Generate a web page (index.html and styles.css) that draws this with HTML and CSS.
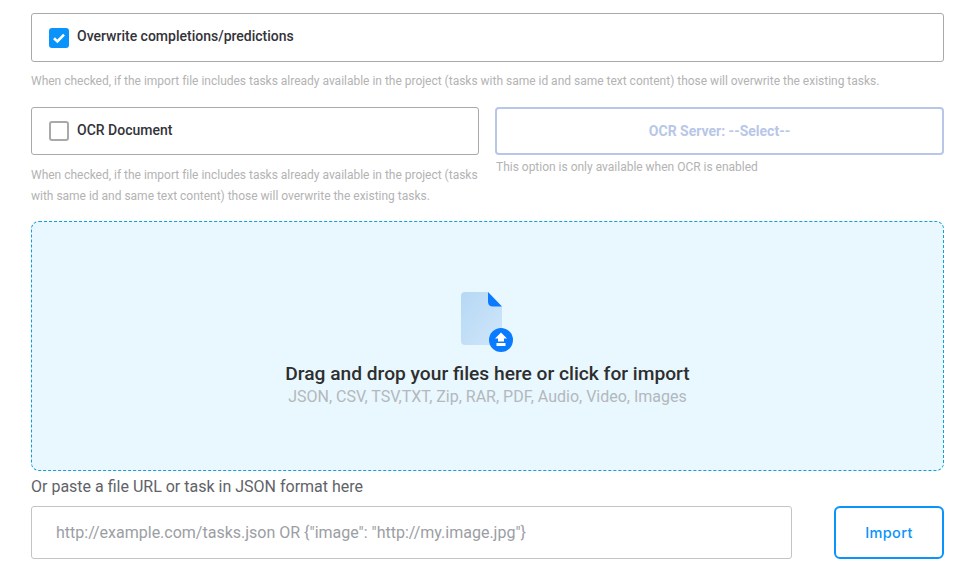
FILE: index.html
```html
<!DOCTYPE html>
<html lang="en">
<head>
    <meta charset="UTF-8">
    <title>Import tasks</title>
    <link rel="stylesheet" href="styles.css">
</head>
<body>
    <div class="import-form">
        <label class="check-box">
            <span class="check check-on">
                <svg width="14" height="12" viewBox="0 0 14 12"><path d="M2 6.2 L5.4 9.4 L12 2.6" fill="none" stroke="#fff" stroke-width="2.6"/></svg>
            </span>
            <span class="check-label">Overwrite completions/predictions</span>
        </label>
        <p class="hint hint-wide">When checked, if the import file includes tasks already available in the project (tasks with same id and same text content) those will overwrite the existing tasks.</p>

        <div class="ocr-row">
            <div class="ocr-col">
                <label class="check-box check-box-ocr">
                    <span class="check"></span>
                    <span class="check-label">OCR Document</span>
                </label>
                <p class="hint hint-ocr">When checked, if the import file includes tasks already available in the project (tasks with same id and same text content) those will overwrite the existing tasks.</p>
            </div>
            <div class="ocr-col">
                <button class="ocr-select">OCR Server: --Select--</button>
                <p class="hint hint-server">This option is only available when OCR is enabled</p>
            </div>
        </div>

        <div class="drop-zone">
            <svg class="drop-icon" width="54" height="62" viewBox="0 0 54 62">
                <defs>
                    <linearGradient id="sheet" x1="0" y1="0" x2="1" y2="1">
                        <stop offset="0" stop-color="#b6d8f4"/>
                        <stop offset="1" stop-color="#cfe6fa"/>
                    </linearGradient>
                </defs>
                <path d="M5 1 H28 L42 16 V50 Q42 54 38 54 H5 Q1 54 1 50 V5 Q1 1 5 1 Z" fill="url(#sheet)"/>
                <path d="M28 1 L42 15.500 H33 Q28 15.500 28 10.500 Z" fill="#0a7bff"/>
                <circle cx="41" cy="49" r="12" fill="#0a7bff"/>
                <path d="M41 41.500 L47 47.500 H44 V50.500 H38 V47.500 H35 Z M36.500 52 H45.500 V55 H36.500 Z" fill="#fff"/>
            </svg>
            <div class="drop-title">Drag and drop your files here or click for import</div>
            <div class="drop-types">JSON, CSV, TSV,TXT, Zip, RAR, PDF, Audio, Video, Images</div>
        </div>

        <div class="url-label">Or paste a file URL or task in JSON format here</div>
        <div class="url-row">
            <input class="url-input" type="text" placeholder="http://example.com/tasks.json OR {&quot;image&quot;: &quot;http://my.image.jpg&quot;}">
            <button class="import-btn">Import</button>
        </div>
    </div>
</body>
</html>
```

FILE: styles.css
```css
body {
    margin: 0;
    background-color: #fff;
    font-family: Roboto, Arial, sans-serif;
}

.import-form {
    width: 913px;
    padding: 13px 0 0 31px;
}

.check-box {
    display: flex;
    align-items: center;
    gap: 8px;
    box-sizing: border-box;
    height: 49px;
    padding-left: 17px;
    border: 1px solid #a9a9a9;
    border-radius: 3px;
}

.check-box-ocr {
    height: 48px;
}

.check {
    display: flex;
    justify-content: center;
    align-items: center;
    box-sizing: border-box;
    width: 20px;
    height: 20px;
    border: 2px solid #a9a9a9;
    border-radius: 3px;
}

.check-on {
    background-color: #0a93fb;
    border-color: #0a93fb;
}

.check-label {
    padding-bottom: 4px;
    font-size: 14px;
    font-weight: 500;
    color: #33333a;
}

.check-box-ocr .check-label {
    padding-bottom: 2px;
}

.hint {
    margin: 0;
    font-size: 12px;
    line-height: 21px;
    letter-spacing: -0.01px;
    color: #b3b3b3;
}

.hint-wide {
    margin-top: 9px;
}

.hint-ocr {
    margin-top: 10px;
}

.hint-server {
    margin-top: 2px;
    padding-left: 1px;
}

.ocr-row {
    display: grid;
    grid-template-columns: 448px 449px;
    gap: 16px;
    margin-top: 15px;
}

.ocr-select {
    display: block;
    width: 100%;
    height: 48px;
    background-color: #fff;
    border: 2px solid #b8c6e8;
    border-radius: 4px;
    font-family: inherit;
    font-size: 14px;
    font-weight: 700;
    color: #b8c6e8;
}

.drop-zone {
    display: flex;
    flex-direction: column;
    align-items: center;
    box-sizing: border-box;
    height: 250px;
    margin-top: 14px;
    padding-top: 69px;
    background-color: #e9f7fe;
    border: 1px dashed #12a0dc;
    border-radius: 8px;
}

.drop-icon {
    display: block;
    margin-right: 2px;
}

.drop-title {
    margin-top: 9px;
    font-size: 19.2px;
    font-weight: 500;
    line-height: 24px;
    color: #2e2e2e;
}

.drop-types {
    font-size: 16px;
    line-height: 22px;
    color: #b3b8bd;
}

.url-label {
    margin-top: 6px;
    font-size: 16px;
    line-height: 19px;
    color: #5f6368;
}

.url-row {
    display: flex;
    justify-content: space-between;
    margin-top: 10px;
}

.url-input {
    box-sizing: border-box;
    width: 761px;
    height: 53px;
    padding: 0 24px;
    border: 1px solid #c4c4c4;
    border-radius: 3px;
    font-family: inherit;
    font-size: 16px;
}

.url-input::placeholder {
    color: #9b9ea3;
    opacity: 1;
}

.import-btn {
    box-sizing: border-box;
    width: 110px;
    height: 53px;
    background-color: #fff;
    border: 2px solid #0a93fb;
    border-radius: 6px;
    font-family: Inter, sans-serif;
    font-size: 14.5px;
    font-weight: 500;
    letter-spacing: 0.4px;
    color: #0a93fb;
}
```
